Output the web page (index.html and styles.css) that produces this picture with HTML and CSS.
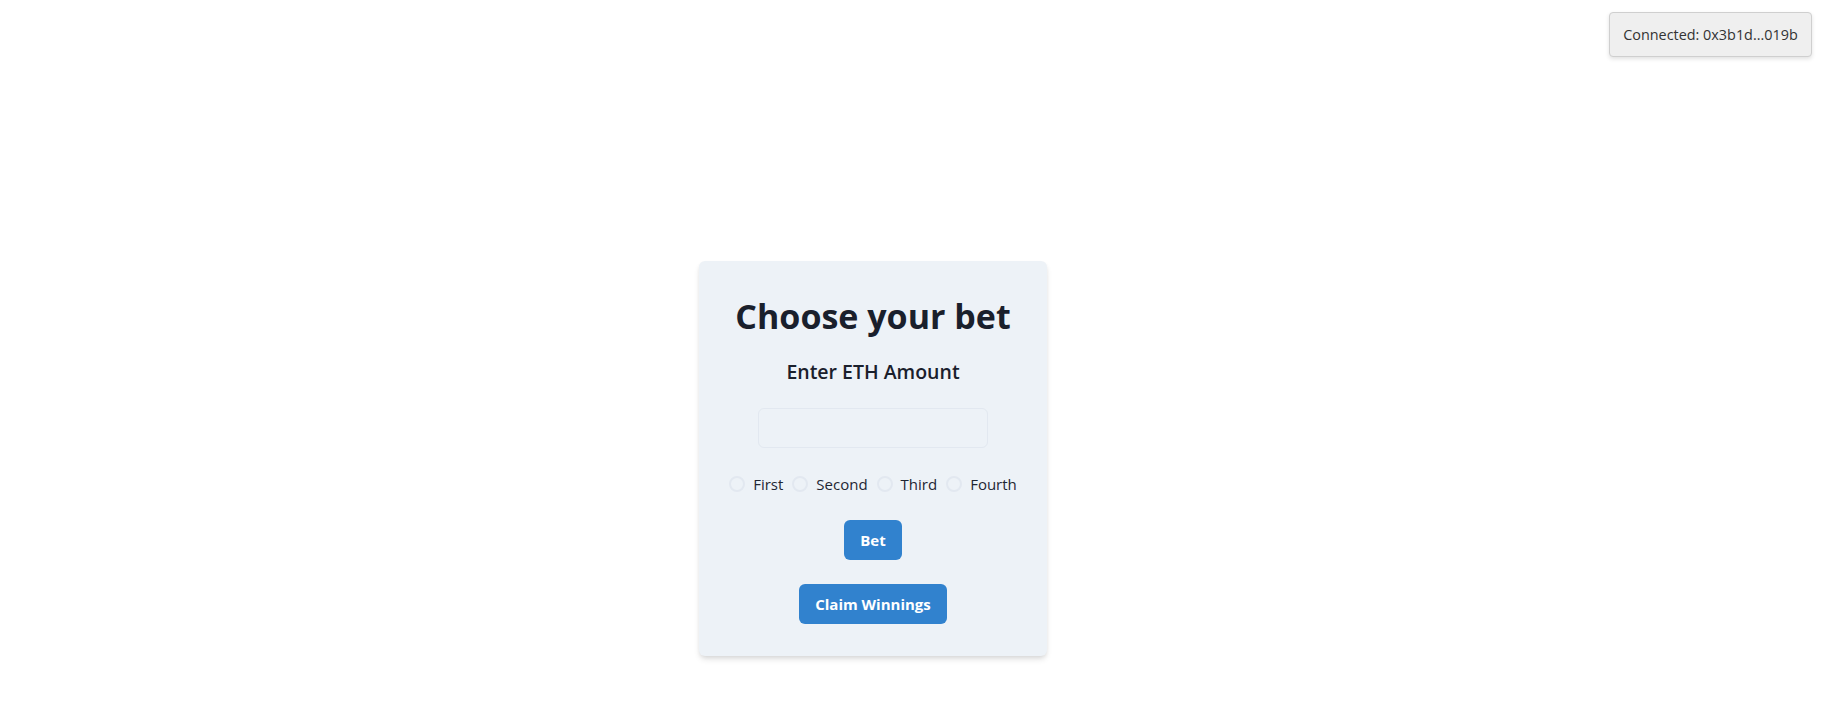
FILE: index.html
```html
<!DOCTYPE html>
<html lang="en">
<head>
<meta charset="utf-8">
<title>Choose your bet</title>
<link rel="stylesheet" href="styles.css">
</head>
<body>
<div class="connected">Connected: 0x3b1d...019b</div>
<main class="page">
  <section class="card">
    <h1 class="title">Choose your bet</h1>
    <h2 class="subtitle">Enter ETH Amount</h2>
    <input class="amount" type="text" aria-label="ETH amount">
    <div class="radios">
      <label class="radio"><span class="dot"></span><span class="radio-label">First</span></label>
      <label class="radio"><span class="dot"></span><span class="radio-label">Second</span></label>
      <label class="radio"><span class="dot"></span><span class="radio-label">Third</span></label>
      <label class="radio"><span class="dot"></span><span class="radio-label">Fourth</span></label>
    </div>
    <button class="btn btn-bet">Bet</button>
    <button class="btn btn-claim">Claim Winnings</button>
  </section>
</main>
</body>
</html>
```

FILE: styles.css
```css
* { box-sizing: border-box; }
html, body { margin: 0; padding: 0; background: #ffffff; }
body {
  font-family: "Open Sans", "Noto Sans", sans-serif;
  color: #1a202c;
  width: 1833px;
  height: 720px;
  position: relative;
  overflow: hidden;
}
.connected {
  position: absolute;
  top: 12px;
  right: 21px;
  width: 203px;
  height: 45px;
  display: flex;
  align-items: center;
  justify-content: center;
  background: #efefef;
  border: 1px solid #cfcfcf;
  border-radius: 4px;
  box-shadow: 0 2px 4px rgba(0,0,0,0.12);
  font-size: 14.4px;
  color: #333333;
}
.page {
  width: 1746px;
  display: flex;
  justify-content: center;
  padding-top: 261px;
}
.card {
  width: 348px;
  padding: 32px 0;
  background: #edf2f7;
  border-radius: 6px;
  box-shadow: 0 4px 6px -1px rgba(0,0,0,0.12), 0 2px 4px -1px rgba(0,0,0,0.07);
  display: flex;
  flex-direction: column;
  align-items: center;
}
.title {
  margin: 0;
  font-size: 34px;
  line-height: 46px;
  font-weight: 700;
  color: #1a202c;
}
.subtitle {
  margin: 19px 0 0;
  font-size: 19.5px;
  line-height: 28px;
  font-weight: 600;
  color: #1a202c;
}
.amount {
  margin-top: 22px;
  width: 230px;
  height: 40px;
  border: 1px solid #e2e8f0;
  border-radius: 6px;
  background: transparent;
  padding: 0 16px;
  font: inherit;
  outline: none;
}
.radios {
  margin-top: 24px;
  height: 24px;
  display: flex;
  align-items: center;
  gap: 9px;
}
.radio {
  display: flex;
  align-items: center;
  gap: 8px;
  font-size: 15px;
  color: #1f2633;
}
.dot {
  width: 16px;
  height: 16px;
  border: 2px solid #e2e8f0;
  border-radius: 50%;
}
.btn {
  height: 40px;
  padding: 0 16px;
  border: none;
  border-radius: 6px;
  background: #3182ce;
  color: #ffffff;
  font-family: inherit;
  font-size: 15px;
  font-weight: 700;
}
.btn-bet { margin-top: 24px; }
.btn-claim { margin-top: 24px; }
```
